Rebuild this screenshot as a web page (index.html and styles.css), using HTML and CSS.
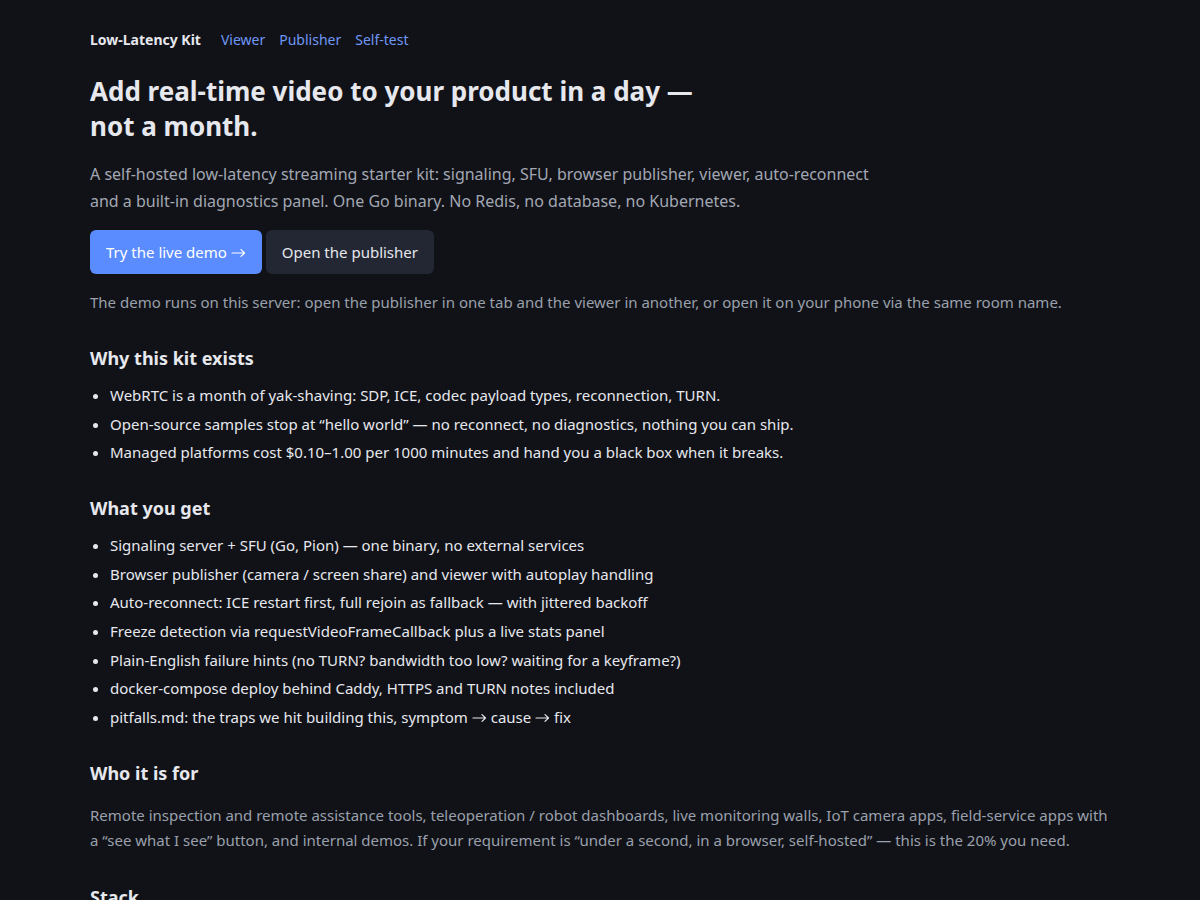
FILE: index.html
```html
<!DOCTYPE html>
<html lang="en">
<head>
    <meta charset="UTF-8">
    <title>Low-Latency Kit</title>
    <link rel="stylesheet" href="styles.css">
</head>
<body>
    <div class="page">
        <nav class="nav">
            <span class="brand">Low-Latency Kit</span>
            <a href="#">Viewer</a>
            <a href="#">Publisher</a>
            <a href="#">Self-test</a>
        </nav>

        <h1>Add real-time video to your product in a day&nbsp;— not a month.</h1>
        <p class="lead">A self-hosted low-latency streaming starter kit: signaling, SFU, browser publisher, viewer, auto&#8209;reconnect and a built-in diagnostics panel. One Go binary. No Redis, no database, no Kubernetes.</p>

        <div class="actions">
            <a class="btn primary" href="#">Try the live demo <svg class="arr" viewBox="0 0 15 10" aria-label="→"><path d="M1 5H13.5M10 1.6L13.5 5L10 8.4"/></svg></a>
            <a class="btn" href="#">Open the publisher</a>
        </div>
        <p class="note">The demo runs on this server: open the publisher in one tab and the viewer in another, or open it on your phone via the same room name.</p>

        <h2>Why this kit exists</h2>
        <ul>
            <li>WebRTC is a month of yak-shaving: SDP, ICE, codec payload types, reconnection, TURN.</li>
            <li>Open-source samples stop at “hello world” — no reconnect, no diagnostics, nothing you can ship.</li>
            <li>Managed platforms cost $0.10–1.00 per 1000 minutes and hand you a black box when it breaks.</li>
        </ul>

        <h2>What you get</h2>
        <ul>
            <li>Signaling server + SFU (Go, Pion) — one binary, no external services</li>
            <li>Browser publisher (camera / screen share) and viewer with autoplay handling</li>
            <li>Auto-reconnect: ICE restart first, full rejoin as fallback — with jittered backoff</li>
            <li>Freeze detection via requestVideoFrameCallback plus a live stats panel</li>
            <li>Plain-English failure hints (no TURN? bandwidth too low? waiting for a keyframe?)</li>
            <li>docker-compose deploy behind Caddy, HTTPS and TURN notes included</li>
            <li>pitfalls.md: the traps we hit building this, symptom <svg class="arr" viewBox="0 0 15 10" aria-label="→"><path d="M1 5H13.5M10 1.6L13.5 5L10 8.4"/></svg> cause <svg class="arr" viewBox="0 0 15 10" aria-label="→"><path d="M1 5H13.5M10 1.6L13.5 5L10 8.4"/></svg> fix</li>
        </ul>

        <h2>Who it is for</h2>
        <p class="muted">Remote inspection and remote assistance tools, teleoperation / robot dashboards, live monitoring walls, IoT camera apps, field-service apps with a “see what I see” button, and internal demos. If your requirement is “under a second, in a browser, self-hosted” — this is the 20% you need.</p>

        <h2>Stack</h2>
        <ul>
            <li>Go + Pion WebRTC for signaling and the SFU</li>
            <li>Plain JavaScript in the browser, no build step</li>
        </ul>
    </div>
</body>
</html>
```

FILE: styles.css
```css
body {
    margin: 0;
    background-color: #111217;
    color: #e6e8ee;
    font-family: "Noto Sans", sans-serif;
    font-size: 15px;
    line-height: 1.6;
}
.page {
    max-width: 1020px;
    margin: 0 auto;
    padding: 30px 0 40px;
}
.nav {
    display: flex;
    align-items: center;
    gap: 14px;
    font-size: 14px;
    line-height: 20px;
}
.nav .brand {
    font-weight: 700;
    margin-right: 6px;
}
.nav a {
    color: #6f97f5;
    text-decoration: none;
}
h1 {
    max-width: 640px;
    margin: 24px 0 17px;
    font-size: 26px;
    line-height: 35px;
    font-weight: 700;
}
.lead {
    max-width: 800px;
    margin: 0 0 15px;
    font-size: 16px;
    line-height: 27px;
    color: #a2a7b3;
}
/* inline arrow, sits on the text baseline */
.arr {
    width: 15px;
    height: 10px;
    vertical-align: 0;
    fill: none;
    stroke: currentColor;
    stroke-width: 1.2;
    stroke-linecap: round;
    stroke-linejoin: round;
}
.actions {
    display: flex;
    gap: 4px;
}
.btn {
    display: inline-block;
    padding: 10px 16px;
    font-size: 15px;
    line-height: 24px;
    color: #e6e8ee;
    background-color: #232733;
    border-radius: 6px;
    text-decoration: none;
}
.btn.primary {
    background-color: #5b8cff;
    color: #ffffff;
}
.note {
    margin: 16px 0 0;
    font-size: 15px;
    line-height: 24px;
    color: #9aa0ac;
}
h2 {
    margin: 32px 0 13px;
    font-size: 18px;
    line-height: 24px;
    font-weight: 700;
}
ul {
    margin: 0;
    padding-left: 20px;
}
li {
    line-height: 24px;
    margin-bottom: 4.6px;
}
.muted {
    margin: 18px 0 0;
    line-height: 25px;
    color: #9aa0ac;
}
```
